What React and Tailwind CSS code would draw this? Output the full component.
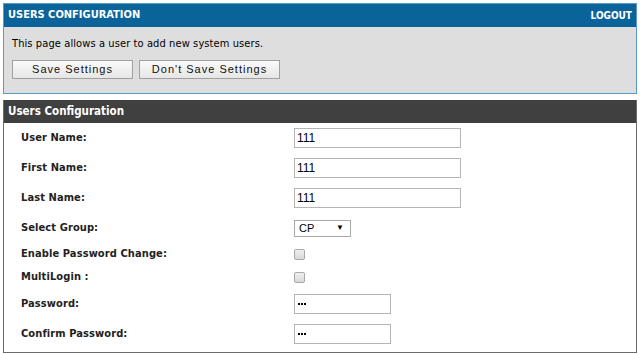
import React from 'react';

const rows = [
  { label: 'User Name:', type: 'text', value: '111' },
  { label: 'First Name:', type: 'text', value: '111' },
  { label: 'Last Name:', type: 'text', value: '111' },
  { label: 'Select Group:', type: 'select', value: 'CP' },
  { label: 'Enable Password Change:', type: 'checkbox' },
  { label: 'MultiLogin :', type: 'checkbox' },
  { label: 'Password:', type: 'password', value: '111' },
  { label: 'Confirm Password:', type: 'password', value: '111' },
];

const Field = ({ row }) => {
  if (row.type === 'checkbox') {
    return (
      <div className="w-[11px] h-[11px] rounded-[2px] border border-[#a8a8a8] bg-gradient-to-b from-[#f0f0f0] to-[#d8d8d8]"></div>
    );
  }
  if (row.type === 'select') {
    return (
      <div className="w-[57px] h-[17px] border border-[#a9a9a9] bg-white flex items-center justify-between pl-[4px] pr-[6px] text-[11px] text-black font-['Liberation_Sans',sans-serif]">
        <span>CP</span>
        <span className="text-[8px]">▼</span>
      </div>
    );
  }
  const width = row.type === 'password' ? 'w-[97px]' : 'w-[167px]';
  return (
    <div className={`${width} h-[20px] border border-[#b5b5b5] bg-white flex items-center px-[2px] text-[12px] text-black font-['Liberation_Sans',sans-serif]`}>
      {row.type === 'password' ? (
        <span className="flex gap-[1px] pl-[1px]">
          <span className="w-[2px] h-[2px] bg-black"></span>
          <span className="w-[2px] h-[2px] bg-black"></span>
          <span className="w-[2px] h-[2px] bg-black"></span>
        </span>
      ) : row.value}
    </div>
  );
};

const App = () => {
  return (
    <div className="w-[640px] h-[354px] bg-white font-['DejaVu_Sans_Condensed','DejaVu_Sans',sans-serif] [font-stretch:condensed] pt-[3px] px-[3px]">
      <div className="border border-[#5a9ac4] w-[634px]">
        <div className="h-[23px] bg-[#0b6499] flex items-center justify-between px-[4px]">
          <span className="text-white font-bold text-[11px]">USERS CONFIGURATION</span>
          <span className="text-white font-bold text-[10px]">LOGOUT</span>
        </div>
        <div className="bg-[#dedede] h-[66px] px-[8px] pt-[9px]">
          <p className="text-[11px] text-black tracking-[0.1px]">This page allows a user to add new system users.</p>
          <div className="flex gap-[6px] mt-[7px]">
            <button className="w-[121px] h-[19px] border border-[#a0a0a0] bg-gradient-to-b from-[#fafafa] to-[#e6e6e6] text-[11px] tracking-[1px] text-[#111] font-['Liberation_Sans',sans-serif]">Save Settings</button>
            <button className="w-[141px] h-[19px] border border-[#a0a0a0] bg-gradient-to-b from-[#fafafa] to-[#e6e6e6] text-[11px] tracking-[1px] text-[#111] font-['Liberation_Sans',sans-serif]">Don't Save Settings</button>
          </div>
        </div>
      </div>
      <div className="mt-[6px] w-[634px] border border-[#6b6b6b] border-t-0">
        <div className="h-[23px] bg-[#404040] flex items-center px-[4px]">
          <span className="text-white font-bold text-[11.5px]">Users Configuration</span>
        </div>
        <div className="bg-white pb-[3px]">
          {rows.map((row) => (
            <div key={row.label} className={`flex items-center ${row.type === 'checkbox' ? 'h-[23px]' : 'h-[30px]'}`}>
              <div className="w-[290px] pl-[17px] text-[11px] font-bold text-[#222] tracking-[0.1px]">{row.label}</div>
              <Field row={row} />
            </div>
          ))}
        </div>
      </div>
    </div>
  );
};

export default App;
